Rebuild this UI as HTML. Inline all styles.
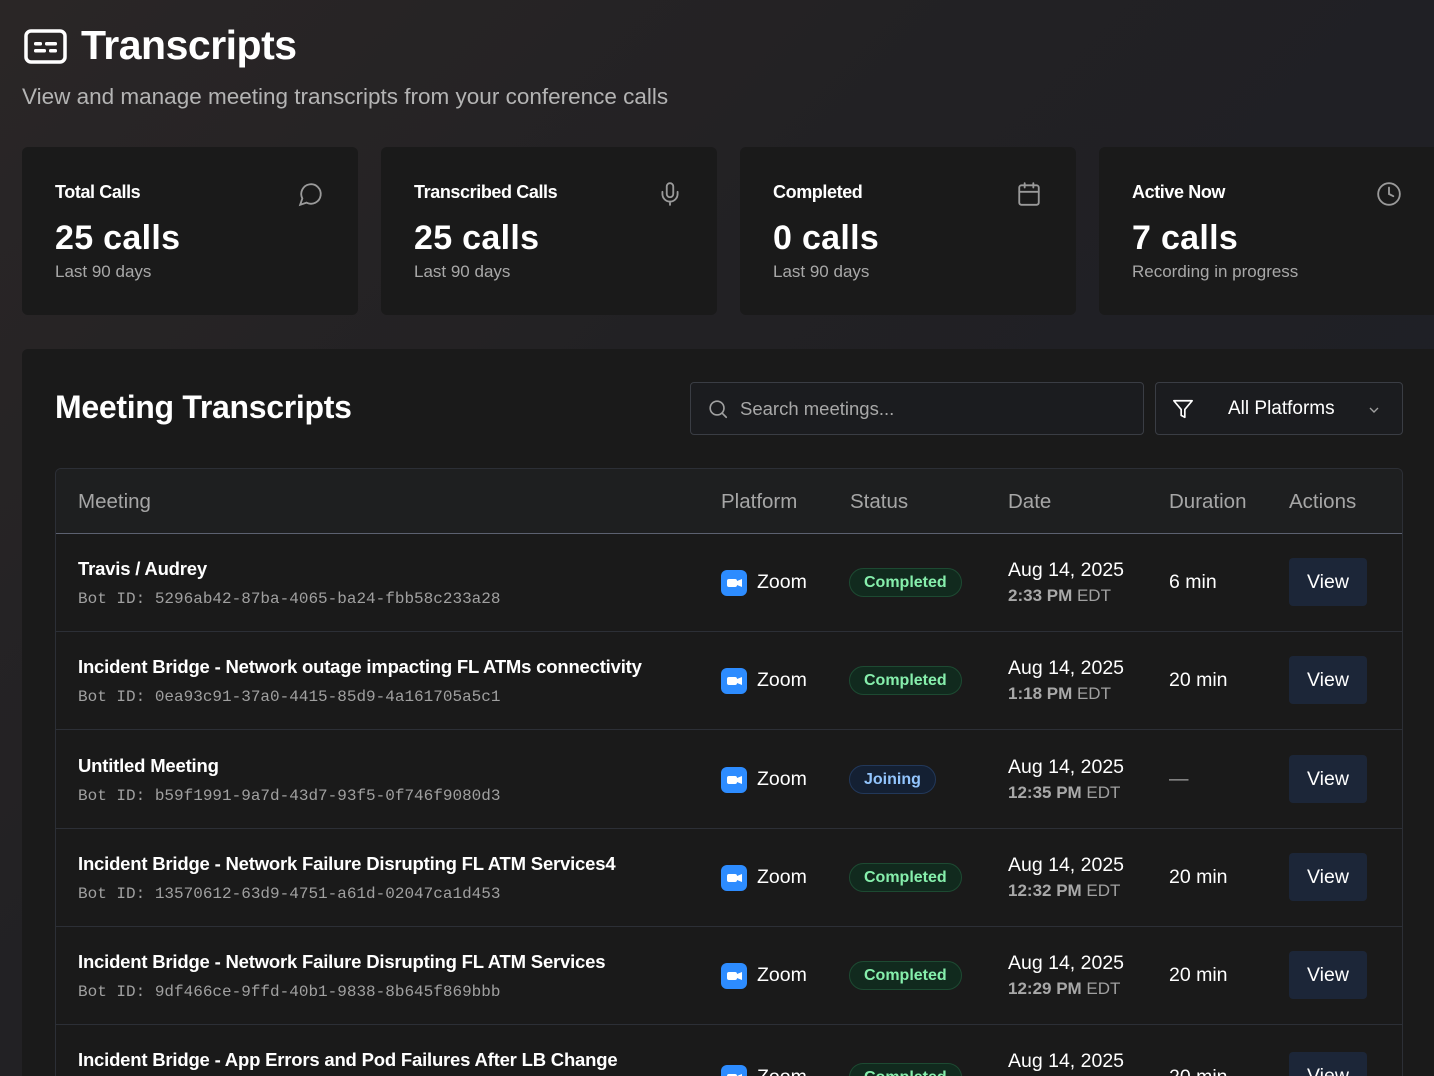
<!DOCTYPE html>
<html><head><meta charset="utf-8"><style>
*{box-sizing:border-box;margin:0;padding:0}
html{width:1434px;height:1076px;overflow:hidden}
body{width:1434px;height:1076px;overflow:hidden;font-family:"Liberation Sans",sans-serif;color:#fff;background:linear-gradient(135deg,#2a2626 0%,#222124 40%,#1c1e27 100%);position:relative}
.abs{position:absolute}
h1{position:absolute;left:81px;top:22px;font-size:41px;font-weight:bold;letter-spacing:-0.5px}
.sub{left:22px;top:84px;font-size:22.5px;color:#b4b4b4}
.card{position:absolute;top:147px;width:336px;height:168px;background:#1a1a1a;border-radius:6px;overflow:hidden}
.card .l{position:absolute;left:33px;top:35px;font-size:18px;font-weight:bold;letter-spacing:-0.4px;color:#fff}
.card .v{position:absolute;left:33px;top:72px;font-size:34px;font-weight:bold;letter-spacing:0.3px}
.card .s{position:absolute;left:33px;top:115px;font-size:17px;color:#a8a8a8}
.card svg{position:absolute;right:34px;top:34px}
.panel{position:absolute;left:22px;top:349px;width:1412px;height:727px;background:#1a1a1a;border-radius:6px 0 0 0}
.tbl{position:absolute;left:55px;top:468px;width:1348px;height:608px;border:1px solid #2c2f36;border-bottom:none;border-radius:6px 6px 0 0;background:#1a1a1a;overflow:hidden}
.th{position:absolute;top:0;left:0;right:0;height:65px;background:#1e1f20;border-bottom:1px solid #5c6170}
.th span{position:absolute;top:21px;font-size:20.5px;color:#a6a6a6}
.row{position:absolute;left:0;right:0;height:98px;border-bottom:1px solid #2c2f36}
.t{position:absolute;left:22px;top:24px;font-size:18.5px;font-weight:bold;letter-spacing:-0.2px}
.id{position:absolute;left:22px;top:56px;font-size:16px;font-family:"Liberation Mono",monospace;color:#a0a0a0}
.zi{position:absolute;left:665px;top:36px;width:26px;height:26px;border-radius:6px;background:#2d8cff}
.zi:before{content:"";position:absolute;left:6px;top:9px;width:10px;height:8px;background:#fff;border-radius:2px}
.zi:after{content:"";position:absolute;left:16px;top:9px;border-right:5px solid #fff;border-top:2px solid transparent;border-bottom:2px solid transparent;height:4px}
.zt{position:absolute;left:701px;top:37px;font-size:19.5px}
.pill{position:absolute;left:793px;top:34px;height:29px;padding:0 14px;border-radius:15px;font-size:16px;font-weight:bold;line-height:27px}
.c{background:#112a1e;border:1px solid #1d4a32;color:#86efac}
.j{background:#142033;border:1px solid #22385a;color:#93c5fd}
.d1{position:absolute;left:952px;top:25px;font-size:19.5px}
.d2{position:absolute;left:952px;top:52px;font-size:17px;color:#a0a0a0}
.d2 b{color:#a8a8a8}
.du{position:absolute;left:1113px;top:37px;font-size:19.5px}
.vb{position:absolute;left:1233px;top:24px;width:78px;height:48px;background:#1c2638;border-radius:4px;font-size:19.5px;text-align:center;line-height:48px}
</style></head><body>
<svg class="abs" style="left:24px;top:29px" width="43" height="35" viewBox="0 0 43 35"><rect x="2" y="2" width="39" height="31" rx="5" fill="none" stroke="#fff" stroke-width="3.5"/><rect x="10" y="13" width="8" height="3.5" rx="1.5" fill="#fff"/><rect x="21" y="13" width="12" height="3.5" rx="1.5" fill="#fff"/><rect x="10" y="20" width="12" height="3.5" rx="1.5" fill="#fff"/><rect x="25" y="20" width="8" height="3.5" rx="1.5" fill="#fff"/></svg>
<h1>Transcripts</h1>
<div class="abs sub">View and manage meeting transcripts from your conference calls</div>

<div class="card" style="left:22px"><div class="l">Total Calls</div><div class="v">25 calls</div><div class="s">Last 90 days</div>
<svg width="26" height="26" viewBox="0 0 24 24" fill="none" stroke="#9a9a9a" stroke-width="1.7"><path d="M7.9 20A9 9 0 1 0 4 16.1L2 22z"/></svg></div>
<div class="card" style="left:381px"><div class="l">Transcribed Calls</div><div class="v">25 calls</div><div class="s">Last 90 days</div>
<svg width="26" height="26" viewBox="0 0 24 24" fill="none" stroke="#9a9a9a" stroke-width="1.7" stroke-linecap="round"><rect x="9" y="2" width="6" height="13" rx="3"/><path d="M19 10v2a7 7 0 0 1-14 0v-2M12 19v3"/></svg></div>
<div class="card" style="left:740px"><div class="l">Completed</div><div class="v">0 calls</div><div class="s">Last 90 days</div>
<svg width="26" height="26" viewBox="0 0 24 24" fill="none" stroke="#9a9a9a" stroke-width="1.7" stroke-linecap="round"><rect x="3" y="4" width="18" height="18" rx="2"/><path d="M16 2v4M8 2v4M3 10h18"/></svg></div>
<div class="card" style="left:1099px;width:335px;border-radius:6px 0 0 6px"><div class="l">Active Now</div><div class="v">7 calls</div><div class="s">Recording in progress</div>
<svg width="26" height="26" viewBox="0 0 24 24" fill="none" stroke="#9a9a9a" stroke-width="1.7" stroke-linecap="round" style="right:auto;left:277px"><circle cx="12" cy="12" r="10"/><path d="M12 6v6l4 2"/></svg></div>

<div class="panel"></div>
<div class="abs" style="left:55px;top:389px;font-size:32px;font-weight:bold;letter-spacing:-0.3px">Meeting Transcripts</div>
<div class="abs" style="left:690px;top:382px;width:454px;height:53px;border:1px solid #3a3d44;border-radius:4px;background:#1b1c1f">
<svg class="abs" style="left:16px;top:15px" width="22" height="22" viewBox="0 0 24 24" fill="none" stroke="#a0a0a0" stroke-width="1.8" stroke-linecap="round"><circle cx="11" cy="11" r="7.5"/><path d="M21 21l-4.3-4.3"/></svg>
<span class="abs" style="left:49px;top:15px;font-size:18.5px;color:#a8a8a8">Search meetings...</span></div>
<div class="abs" style="left:1155px;top:382px;width:248px;height:53px;border:1px solid #3a3d44;border-radius:4px;background:#1b1c1f">
<svg class="abs" style="left:16px;top:15px" width="22" height="22" viewBox="0 0 24 24" fill="none" stroke="#fff" stroke-width="1.8" stroke-linejoin="round"><path d="M22 3H2l8 9.5V19l4 2v-8.5z"/></svg>
<span class="abs" style="left:72px;top:15px;font-size:19px">All Platforms</span>
<svg class="abs" style="left:210px;top:19px" width="16" height="16" viewBox="0 0 24 24" fill="none" stroke="#a0a0a0" stroke-width="2"><path d="M6 9l6 6 6-6"/></svg></div>

<div class="tbl">
<div class="th"><span style="left:22px">Meeting</span><span style="left:665px">Platform</span><span style="left:794px">Status</span><span style="left:952px">Date</span><span style="left:1113px">Duration</span><span style="left:1233px">Actions</span></div>

<div class="row" style="top:65px"><div class="t">Travis / Audrey</div><div class="id">Bot ID: 5296ab42-87ba-4065-ba24-fbb58c233a28</div><div class="zi"></div><div class="zt">Zoom</div><div class="pill c">Completed</div><div class="d1">Aug 14, 2025</div><div class="d2"><b>2:33 PM</b> EDT</div><div class="du">6 min</div><div class="vb">View</div></div>
<div class="row" style="top:163px"><div class="t">Incident Bridge - Network outage impacting FL ATMs connectivity</div><div class="id">Bot ID: 0ea93c91-37a0-4415-85d9-4a161705a5c1</div><div class="zi"></div><div class="zt">Zoom</div><div class="pill c">Completed</div><div class="d1">Aug 14, 2025</div><div class="d2"><b>1:18 PM</b> EDT</div><div class="du">20 min</div><div class="vb">View</div></div>
<div class="row" style="top:262px"><div class="t">Untitled Meeting</div><div class="id">Bot ID: b59f1991-9a7d-43d7-93f5-0f746f9080d3</div><div class="zi"></div><div class="zt">Zoom</div><div class="pill j">Joining</div><div class="d1">Aug 14, 2025</div><div class="d2"><b>12:35 PM</b> EDT</div><div class="du" style="color:#a0a0a0">—</div><div class="vb">View</div></div>
<div class="row" style="top:360px"><div class="t">Incident Bridge - Network Failure Disrupting FL ATM Services4</div><div class="id">Bot ID: 13570612-63d9-4751-a61d-02047ca1d453</div><div class="zi"></div><div class="zt">Zoom</div><div class="pill c">Completed</div><div class="d1">Aug 14, 2025</div><div class="d2"><b>12:32 PM</b> EDT</div><div class="du">20 min</div><div class="vb">View</div></div>
<div class="row" style="top:458px"><div class="t">Incident Bridge - Network Failure Disrupting FL ATM Services</div><div class="id">Bot ID: 9df466ce-9ffd-40b1-9838-8b645f869bbb</div><div class="zi"></div><div class="zt">Zoom</div><div class="pill c">Completed</div><div class="d1">Aug 14, 2025</div><div class="d2"><b>12:29 PM</b> EDT</div><div class="du">20 min</div><div class="vb">View</div></div>
<div class="row" style="top:556px;height:52px;border-bottom:none"><div class="t">Incident Bridge - App Errors and Pod Failures After LB Change</div><div class="zi" style="top:40px;height:12px;border-radius:6px 6px 0 0"></div><div class="zt" style="top:41px;height:11px;overflow:hidden">Zoom</div><div class="pill c" style="top:38px;height:14px;overflow:hidden;border-bottom:none;border-radius:15px 15px 0 0">Completed</div><div class="d1">Aug 14, 2025</div><div class="du" style="top:41px;height:11px;overflow:hidden">20 min</div><div class="vb" style="top:27px;height:25px;overflow:hidden;border-radius:4px 4px 0 0">View</div></div>
</div>
</body></html>
